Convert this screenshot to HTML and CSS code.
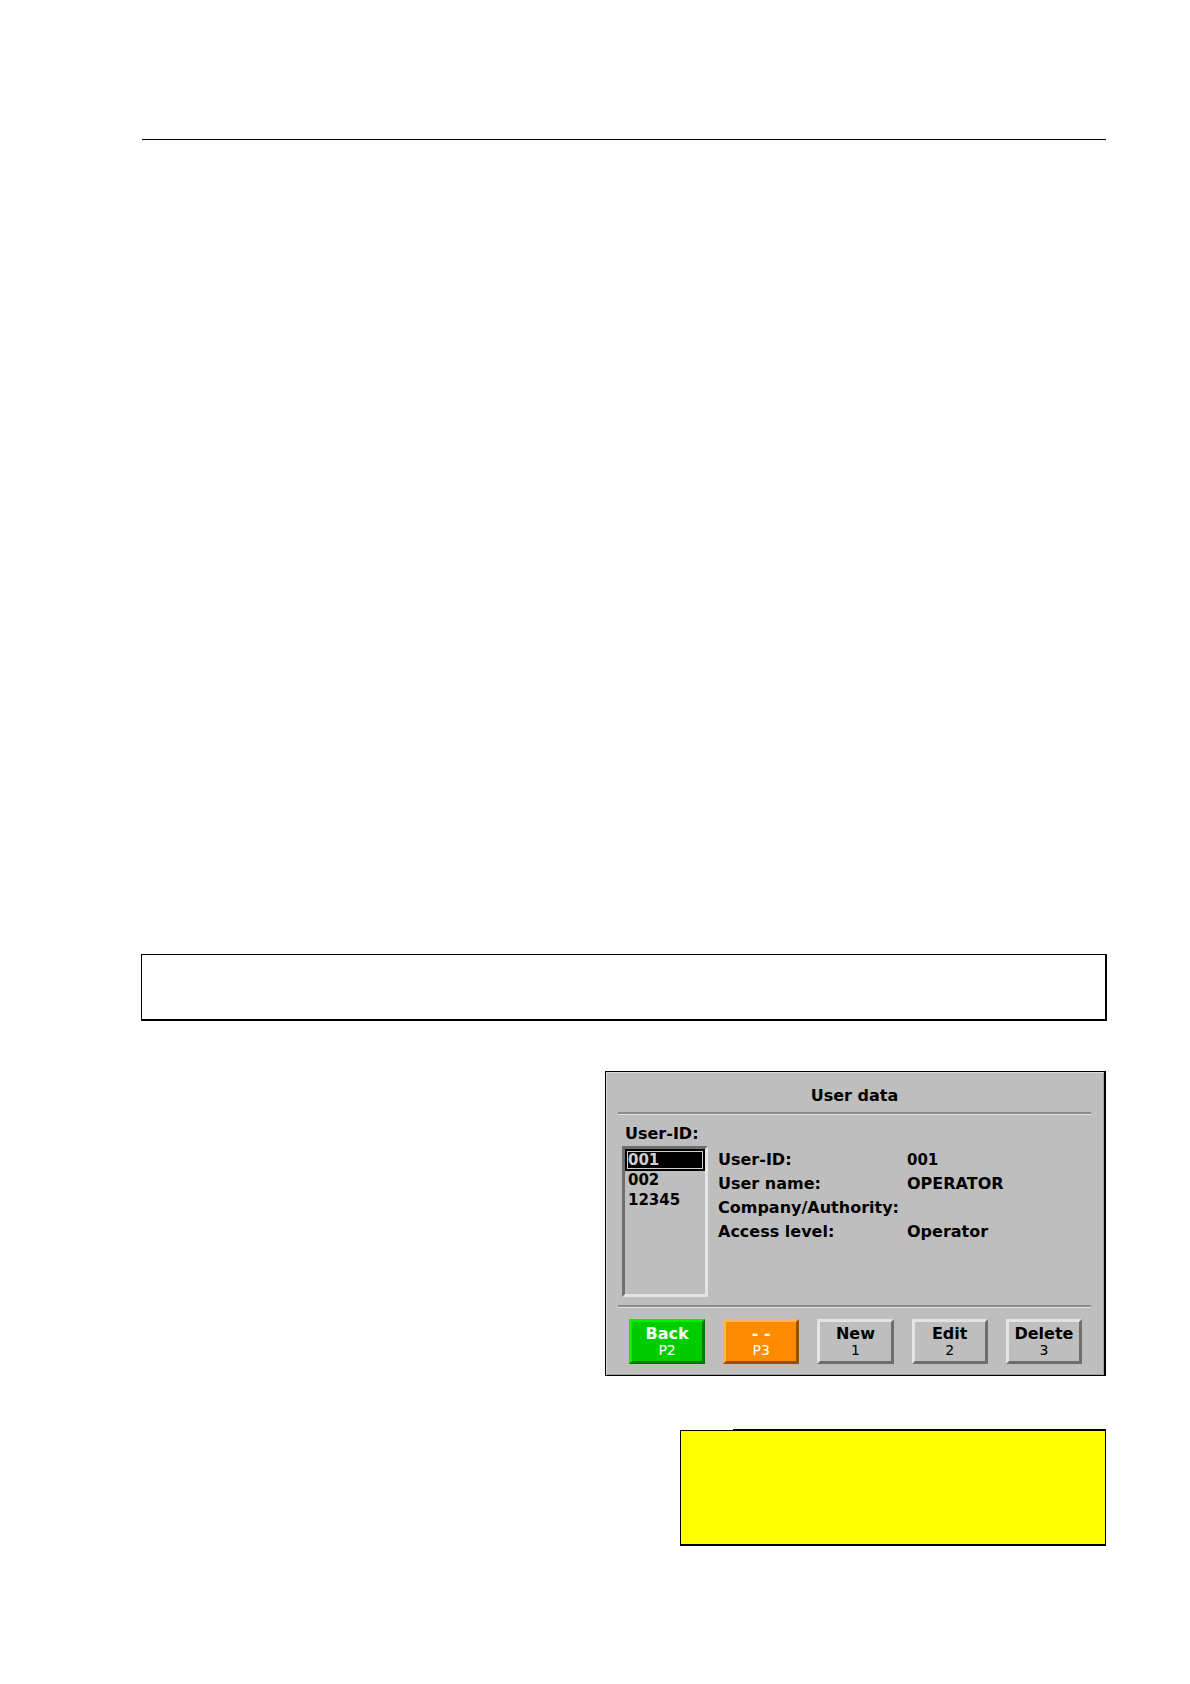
FILE: index.html
```
<!DOCTYPE html>
<html lang="en">
<head>
    <meta charset="utf-8">
    <link rel="stylesheet" href="styles.css">

    <title>User data</title>
</head>
<body>
    <div class="page">
        <header class="page-header"></header>
        <div class="page-body"></div>
        <div class="note-box"></div>

        <main class="screen">
            <h1 class="title">User data</h1>
            <div class="content">
                <div class="users">
                    <label class="label" for="user_id">User-ID:</label>
                    <select class="user-list" id="user_id" name="user_id" size="7">
                        <option selected>001</option>
                        <option>002</option>
                        <option>12345</option>
                    </select>
                </div>
                <dl class="details">
                    <dt>User-ID:</dt>
                    <dd class="number">001</dd>
                    <dt>User name:</dt>
                    <dd>OPERATOR</dd>
                    <dt>Company/Authority:</dt>
                    <dd></dd>
                    <dt>Access level:</dt>
                    <dd>Operator</dd>
                </dl>
            </div>
            <div class="buttons">
                <button class="btn btn-back" type="button">Back<span class="key">P2</span></button>
                <button class="btn btn-blank" type="button">- -<span class="key">P3</span></button>
                <button class="btn" type="button">New<span class="key">1</span></button>
                <button class="btn" type="button">Edit<span class="key">2</span></button>
                <button class="btn" type="button">Delete<span class="key">3</span></button>
            </div>
        </main>

        <div class="warning-box"></div>
    </div>
</body>
</html>
```
FILE: styles.css
```
* {
    box-sizing: border-box;
}

body {
    margin: 0;
    background-color: #FFF;
    color: #000;
    font-family: "DejaVu Sans", Verdana, sans-serif;
}

.page {
    display: flex;
    flex-direction: column;
    min-height: 100vh;
    padding: 0 84px 138px 141px;
}

.page-header {
    height: 140px;
    margin-left: 1px;
    border-bottom: 1px solid #000;
}

.page-body {
    flex: 1;
    min-height: 400px;
}

.note-box {
    height: 67px;
    margin-right: -1px;
    border: solid #000;
    border-width: 1px 2px 2px 1px;
}

/* device display */
.screen {
    align-self: flex-end;
    width: 501px;
    margin-top: 50px;
    padding: 0 13px 11px 12px;
    border: solid #000;
    border-width: 1px 2px 1px 1px;
    background-color: #BEBEBE;
    box-shadow: inset 1px 1px #DADADA, inset -1px -1px #A0A0A0;
    font-size: 16px;
    font-weight: bold;
}

.title {
    margin: 0;
    padding: 12px 0 4px;
    border-bottom: 2px solid #8C8C8C;
    box-shadow: 0 1px #E4E4E4;
    font-size: 16px;
    line-height: 24px;
    text-align: center;
}

.content {
    display: flex;
    gap: 10px;
    padding: 8px 4px 8px;
    border-bottom: 2px solid #8C8C8C;
    box-shadow: 0 1px #E4E4E4;
}

.users {
    width: 86px;
}

.label {
    display: block;
    padding-left: 3px;
    line-height: 24px;
    white-space: nowrap;
}

.user-list {
    display: block;
    width: 100%;
    height: 151px;
    padding: 0;
    border: 3px solid;
    border-color: #6E6E6E #E4E4E4 #E4E4E4 #6E6E6E;
    border-radius: 0;
    background-color: #BEBEBE;
    color: #000;
    font: bold 15px "DejaVu Sans", Verdana, sans-serif;
    overflow: hidden;
    outline: none;
}

.user-list option {
    min-height: 20px;
    padding: 0 3px;
    font-weight: bold;
    line-height: 20px;
}

.user-list option:checked {
    padding: 2px 3px;
    background: #000 linear-gradient(#000, #000);
    color: #D0D0D0;
    outline: 1px solid #D0D0D0;
    outline-offset: -3px;
}

.details {
    display: grid;
    grid-template-columns: 189px 1fr;
    grid-auto-rows: 24px;
    align-content: start;
    flex: 1;
    margin: 0;
    padding-top: 26px;
    line-height: 24px;
}

.details dd {
    margin: 0;
}

.details .number {
    font-size: 15px;
}

.buttons {
    display: grid;
    grid-template-columns: repeat(5, 1fr);
    gap: 18px;
    padding: 12px 9px 0 11px;
}

.btn {
    height: 45px;
    padding: 0;
    border: 3px solid;
    border-color: #E4E4E4 #6E6E6E #6E6E6E #E4E4E4;
    background-color: #BEBEBE;
    color: #000;
    font: bold 16px/16px "DejaVu Sans", Verdana, sans-serif;
    cursor: pointer;
}

.btn-back {
    border-color: #00F000 #007800 #007800 #00F000;
    background-color: #00CD00;
    color: #FFF;
}

.btn-blank {
    border-color: #FFB45A #965000 #965000 #FFB45A;
    background-color: #FF8C00;
    color: #FFF;
}

.key {
    display: block;
    font-size: 14px;
    font-weight: normal;
}

.warning-box {
    position: relative;
    align-self: flex-end;
    width: 426px;
    height: 116px;
    margin-top: 54px;
    border: solid #000;
    border-width: 1px 1px 2px 1px;
    background-color: #FF0;
}

/* the top edge is heavier from here to the right corner */
.warning-box::before {
    content: "";
    position: absolute;
    top: -2px;
    left: 52px;
    right: -1px;
    height: 1px;
    background-color: #000;
}
```
